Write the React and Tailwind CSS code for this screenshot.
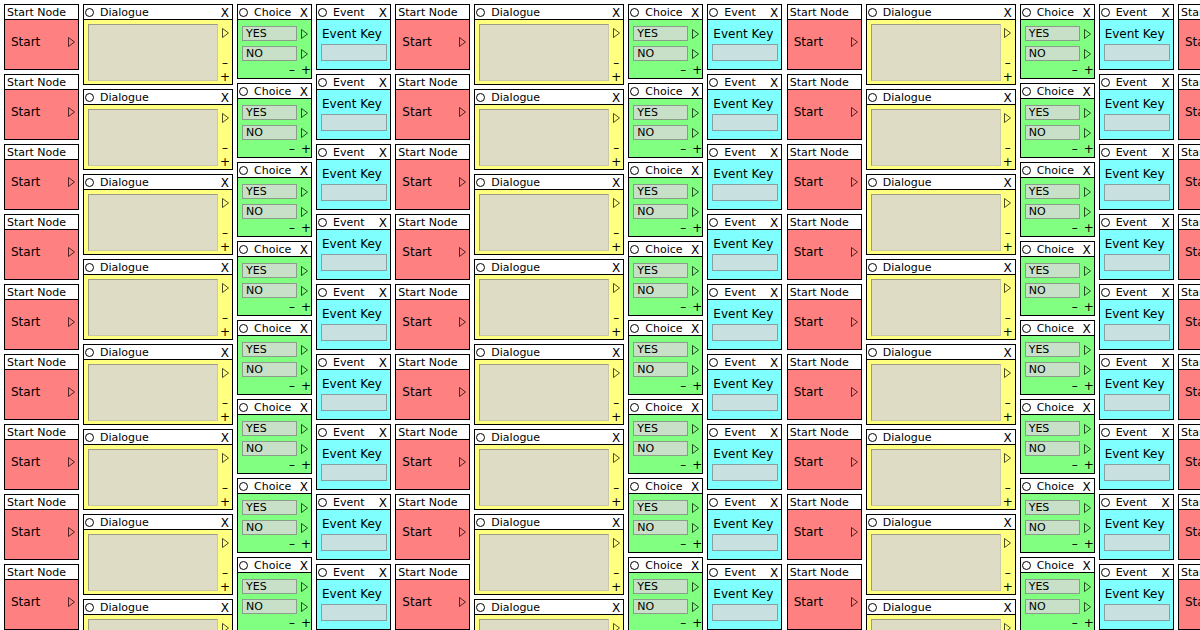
import React from "react";

const Port = () => (
  <svg width="7" height="10" viewBox="0 0 7 10" className="block shrink-0">
    <path d="M0.5 0.5 L6.5 5 L0.5 9.5 Z" fill="none" stroke="#000" strokeOpacity="0.7" />
  </svg>
);

const Header = ({ title, closable }) => (
  <div className="flex h-[15px] shrink-0 items-center border-b border-black bg-white pt-[1px] text-[11px] leading-[14px]">
    {closable && <span className="ml-[1px] h-[9px] w-[9px] shrink-0 rounded-full border border-black" />}
    <span className={closable ? "ml-[6px]" : "ml-[2px]"}>{title}</span>
    {closable && <span className="ml-auto mr-[3px] text-[12px]">X</span>}
  </div>
);

const StartNode = () => (
  <div className="flex h-[66px] w-[75px] shrink-0 flex-col border border-black">
    <Header title="Start Node" />
    <div className="flex-1 bg-[#ff8080] pl-[6px] pr-[3px] pt-[15px]">
      <div className="flex h-[14px] items-center justify-between">
        <span className="text-[12px] leading-[14px]">Start</span>
        <Port />
      </div>
    </div>
  </div>
);

const DialogueNode = () => (
  <div className="flex h-[81px] w-[150px] shrink-0 flex-col border border-black">
    <Header title="Dialogue" closable />
    <div className="flex flex-1 bg-[#ffff80]">
      <div className="mb-[3px] ml-[4px] mt-[4px] w-[130px] border border-b-[#c9c8ad] border-l-[#9c9b86] border-r-[#c9c8ad] border-t-[#9c9b86] bg-[#dedcc4]" />
      <div className="flex flex-1 flex-col items-center pb-[1px] pt-[8px] text-[12px] leading-[12px]">
        <Port />
        <span className="mt-auto">–</span>
        <span className="mt-[2px]">+</span>
      </div>
    </div>
  </div>
);

const ChoiceRow = ({ label, className }) => (
  <div className={`flex items-center ${className}`}>
    <div className="flex h-[15px] w-[55px] items-center border border-[#8a9c8a] bg-[#c8e0c8] pl-[3px] text-[11px] leading-[13px]">
      {label}
    </div>
    <span className="ml-[4px]">
      <Port />
    </span>
  </div>
);

const ChoiceNode = () => (
  <div className="flex h-[75px] w-[75px] shrink-0 flex-col border border-black">
    <Header title="Choice" closable />
    <div className="flex flex-1 flex-col bg-[#80ff80] pl-[4px] pt-[6px]">
      <ChoiceRow label="YES" />
      <ChoiceRow label="NO" className="mt-[5px]" />
      <div className="mt-[3px] flex justify-end gap-[5px] pr-[2px] text-[12px] leading-[13px]">
        <span className="w-[8px] text-center">–</span>
        <span className="w-[8px] text-center">+</span>
      </div>
    </div>
  </div>
);

const EventNode = () => (
  <div className="flex h-[66px] w-[75px] shrink-0 flex-col border border-black">
    <Header title="Event" closable />
    <div className="flex flex-1 flex-col bg-[#80ffff] pl-[4px] pt-[7px]">
      <span className="pl-[1px] text-[12px] leading-[14px]">Event Key</span>
      <div className="mt-[3px] h-[17px] w-[66px] border border-[#8aa0a0] bg-[#c8e0e0]" />
    </div>
  </div>
);

const columns = [
  { key: "start", Node: StartNode, count: 9 },
  { key: "dialogue", Node: DialogueNode, count: 8 },
  { key: "choice", Node: ChoiceNode, count: 8 },
  { key: "event", Node: EventNode, count: 9 },
];

export default function App() {
  return (
    <div className="h-[630px] w-[1200px] overflow-hidden bg-white pl-[4px] pt-[4px] font-['DejaVu_Sans',sans-serif] text-black">
      <div className="flex gap-[4.33px]">
        {[0, 1, 2, 3].map((set) => (
          <div key={set} className="flex shrink-0 items-start gap-[4px]">
            {columns.map(({ key, Node, count }) => (
              <div key={key} className="flex shrink-0 flex-col gap-[4px]">
                {Array.from({ length: count }).map((_, i) => (
                  <Node key={i} />
                ))}
              </div>
            ))}
          </div>
        ))}
      </div>
    </div>
  );
}
